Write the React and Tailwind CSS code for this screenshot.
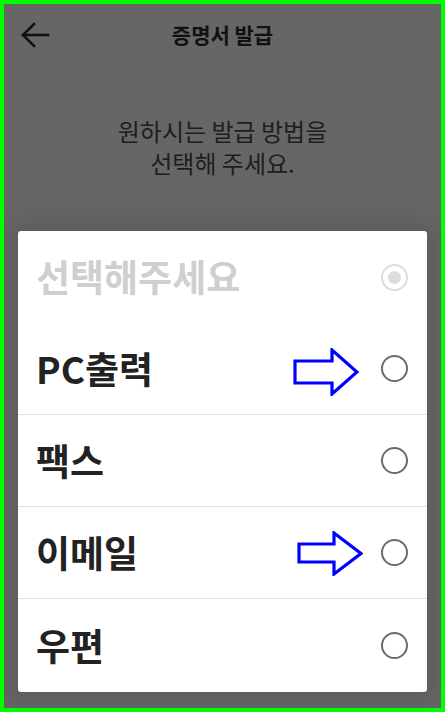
const rows = [
  { label: "PC출력", arrow: { w: 66, h: 48, shaft: [13, 35], head: 39, mt: 6, mr: 22 } },
  { label: "팩스" },
  { label: "이메일", arrow: { w: 66, h: 45, shaft: [13, 31], head: 37, mt: 2, mr: 18 } },
  { label: "우편" }
];

function BackArrow() {
  return (
    <svg width="30" height="26" viewBox="0 0 30 26" fill="none" stroke="#111" strokeWidth="2.6" strokeLinecap="square">
      <path d="M3 13H28" />
      <path d="M14 2L3 13L14 24" />
    </svg>
  );
}

function HintArrow({ w, h, shaft, head }) {
  const mid = h / 2;
  const pts = [
    [2, shaft[0]],
    [head, shaft[0]],
    [head, 2],
    [w - 2, mid],
    [head, h - 2],
    [head, shaft[1]],
    [2, shaft[1]]
  ]
    .map((p) => p.join(","))
    .join(" ");
  return (
    <svg width={w} height={h} viewBox={`0 0 ${w} ${h}`}>
      <polygon points={pts} fill="white" stroke="#0000ff" strokeWidth="3.2" />
    </svg>
  );
}

function Radio({ checked }) {
  if (checked) {
    return (
      <span className="flex h-[27px] w-[27px] items-center justify-center rounded-full border-[2.5px] border-[#dcdcdc]">
        <span className="h-[13px] w-[13px] rounded-full bg-[#dcdcdc]" />
      </span>
    );
  }
  return <span className="h-[27px] w-[27px] rounded-full border-[2.5px] border-[#6b6b6b]" />;
}

export default function App() {
  return (
    <div
      className="flex h-[712px] w-[445px] flex-col overflow-hidden border-4 border-[#00ff00] bg-[#666666]"
      style={{ fontFamily: '"Noto Sans CJK KR", "Noto Sans", sans-serif' }}
    >
      <header className="flex h-[62px] items-center px-[16px]">
        <BackArrow />
        <h1 className="flex-1 text-center text-[21px] font-bold text-[#111]">증명서 발급</h1>
        <span className="w-[30px]" />
      </header>

      <p className="mt-[49px] text-center text-[24px] leading-[32px] text-[#1e1e1e]">
        원하시는 발급 방법을
        <br />
        선택해 주세요.
      </p>

      <div className="mx-[14px] mt-[52px] rounded-[3px] bg-white shadow-[0_0_22px_10px_rgba(0,0,0,0.09)]">
        <div className="flex h-[92px] items-center justify-between pl-[18px] pr-[19px]">
          <span className="text-[37px] font-bold text-[#cfcfcf]">선택해주세요</span>
          <Radio checked />
        </div>
        {rows.map((row, i) => (
          <div
            key={row.label}
            className={`flex items-center pl-[18px] pr-[19px] ${i < rows.length - 1 ? "h-[92px] border-b border-[#e2e2e2]" : "h-[93px]"}`}
          >
            <span className="flex-1 text-[37px] font-bold text-[#222]">{row.label}</span>
            {row.arrow && (
              <span className="flex" style={{ marginTop: row.arrow.mt, marginRight: row.arrow.mr }}>
                <HintArrow {...row.arrow} />
              </span>
            )}
            <Radio />
          </div>
        ))}
      </div>
    </div>
  );
}
